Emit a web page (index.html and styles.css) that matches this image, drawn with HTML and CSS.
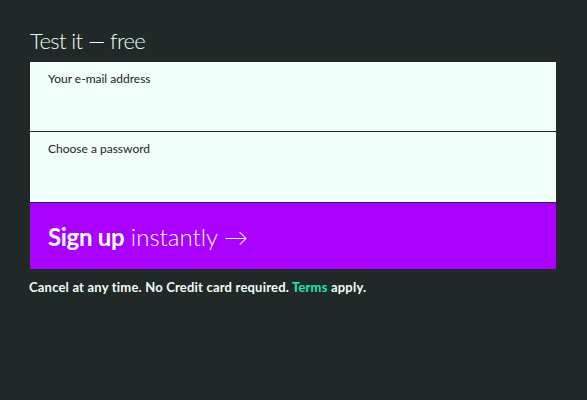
FILE: index.html
```html
<!DOCTYPE html>
<html lang="en">

<head>
    <meta charset="UTF-8">
    <meta name="viewport" content="width=device-width, initial-scale=1.0">
    <title>Test it — free</title>
    <link rel="stylesheet" href="styles.css">
</head>

<body>
    <div class="container">
        <h1>Test it — free</h1>
        <form class="signup">
            <label class="field">
                <span>Your e-mail address</span>
                <input type="email">
            </label>
            <label class="field">
                <span>Choose a password</span>
                <input type="password">
            </label>
            <button type="submit"><b>Sign up</b> instantly &rarr;</button>
        </form>
        <p class="note">Cancel at any time. No Credit card required. <a href="#">Terms</a> apply.</p>
    </div>
</body>

</html>
```

FILE: styles.css
```css
body {
    font-family: Lato, "Open Sans", sans-serif;
    background-color: #202828;
    color: #fff;
    margin: 0;
    padding: 0;
    height: 100vh;
}

.container {
    padding: 28px 31px 0 30px;
}

h1 {
    margin: 0 0 8px 0;
    font-size: 22px;
    font-weight: 300;
    line-height: 26px;
    letter-spacing: -0.6px;
    color: #f0fffa;
}

.signup {
    display: flex;
    flex-direction: column;
}

.field {
    display: flex;
    flex-direction: column;
    background-color: #f0fffa;
    padding: 10px 18px 0 18px;
    height: 59px;
    border-bottom: 1px solid #202828;
}

.field:nth-child(2) {
    height: 60px;
}

.field span {
    font-size: 12px;
    color: #222;
    line-height: 14px;
}

.field input {
    border: none;
    background: transparent;
    outline: none;
    font-size: 16px;
    padding: 6px 0;
}

button {
    height: 66px;
    padding: 0 18px;
    text-align: left;
    background-color: #aa00ff;
    border: none;
    font-family: inherit;
    font-size: 24px;
    font-weight: 300;
    color: #fff;
    cursor: pointer;
}

button b {
    font-weight: 700;
    letter-spacing: -0.3px;
}

.note {
    margin: 10px 0 0 -1px;
    font-size: 13px;
    font-weight: 700;
    letter-spacing: 0.2px;
    color: #f0fffa;
}

.note a {
    color: #1de9b6;
    text-decoration: none;
}
```
